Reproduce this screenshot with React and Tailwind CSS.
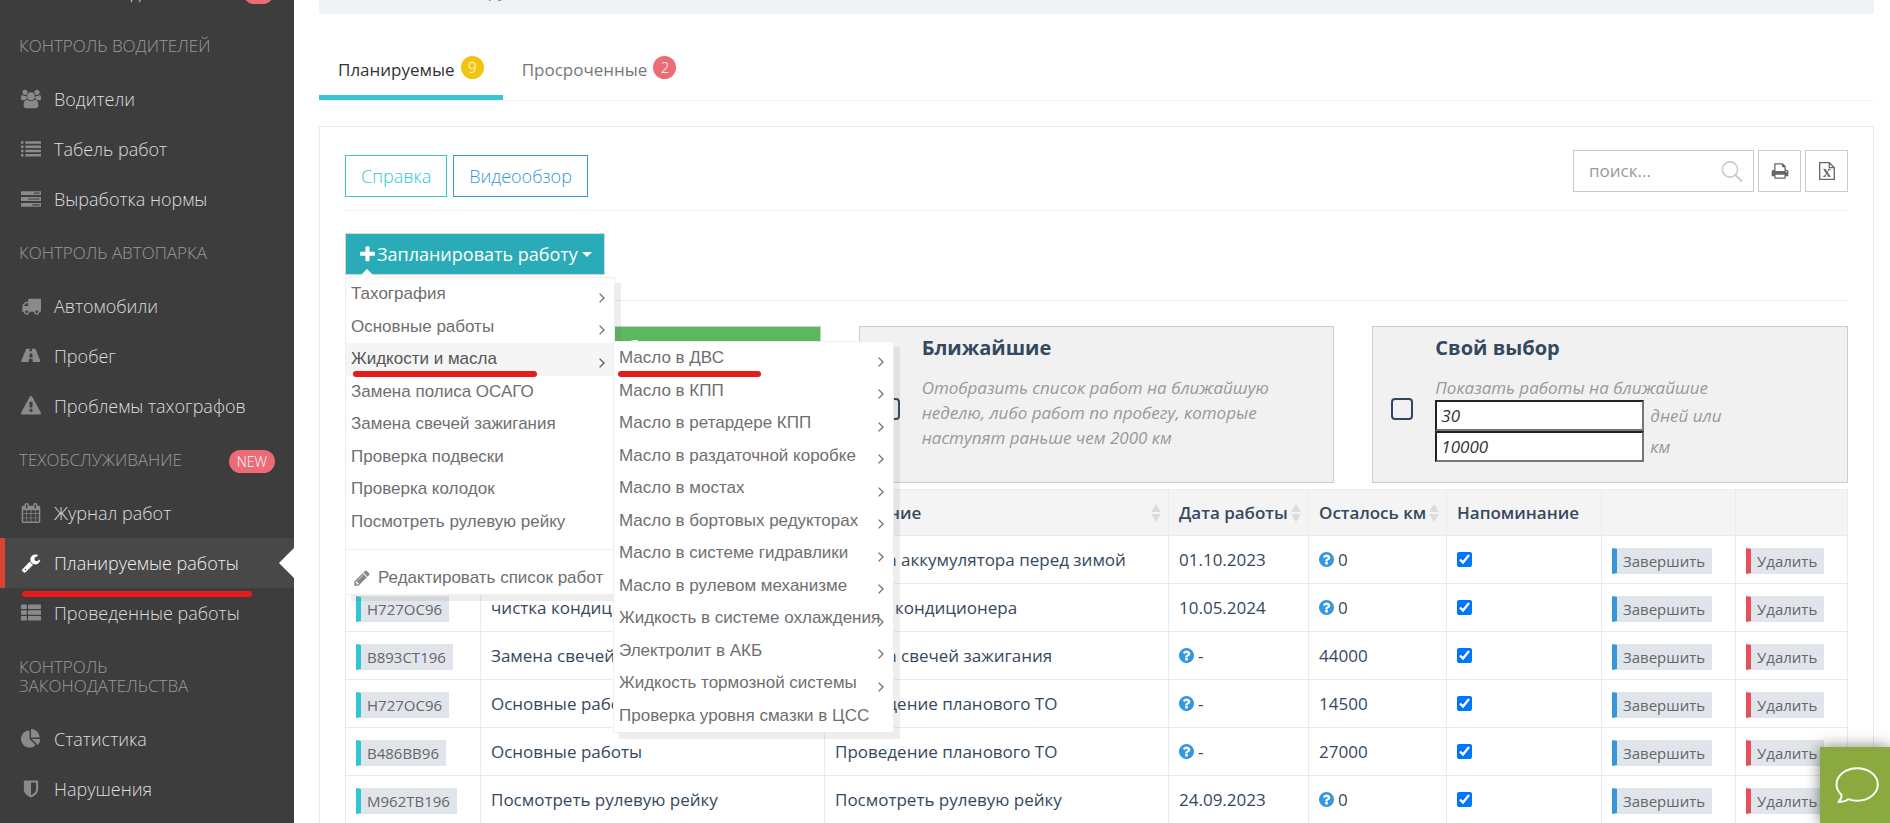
import React from "react";

const PATHS = {
  users: {
    box: "0 0 1920 1792",
    d: "M593 896q-162 5-265 128h-134q-82 0-138-40.5t-56-118.5q0-353 124-353 6 0 43.5 21t97.5 42.5 119 21.5q67 0 133-23-5 37-5 66 0 159 92 256zm1071 637q0 120-73 189.5t-194 69.5h-874q-121 0-194-69.5t-73-189.5q0-53 3.5-103.5t14-109 26.5-108.5 43-97.5 62-81 85.5-53.5 111.5-20q10 0 43 21.5t73 48 107 48 135 21.5 135-21.5 107-48 73-48 43-21.5q61 0 111.5 20t85.5 53.5 62 81 43 97.5 26.5 108.5 14 109 3.5 103.5zm-1024-1277q0 106-75 181t-181 75-181-75-75-181 75-181 181-75 181 75 75 181zm704 384q0 159-112.5 271.5t-271.5 112.5-271.5-112.5-112.5-271.5 112.5-271.5 271.5-112.5 271.5 112.5 112.5 271.5zm576 225q0 78-56 118.5t-138 40.5h-134q-103-123-265-128 92-97 92-256 0-29-5-66 66 23 133 23 59 0 119-21.5t97.5-42.5 43.5-21q124 0 124 353zm-128-609q0 106-75 181t-181 75-181-75-75-181 75-181 181-75 181 75 75 181z",
  },
  laptop: {
    box: "0 0 1920 1792",
    d: "M416 1280q-66 0-113-47t-47-113v-704q0-66 47-113t113-47h1088q66 0 113 47t47 113v704q0 66-47 113t-113 47h-1088zm-32-864v704q0 13 9.500 22.500t22.500 9.500h1088q13 0 22.500-9.500t9.500-22.500v-704q0-13-9.500-22.500t-22.500-9.500h-1088q-13 0-22.500 9.500t-9.500 22.500zM0 1390h1920v120q0 82-160 82H160q-160 0-160-82z",
  },
  list: {
    box: "0 0 1792 1792",
    d: "M0 192h224v224H0zM384 192h1408v224H384zM0 576h224v224H0zM384 576h1408v224H384zM0 960h224v224H0zM384 960h1408v224H384zM0 1344h224v224H0zM384 1344h1408v224H384z",
  },
  tasks: {
    box: "0 0 1792 1792",
    fillRule: "evenodd",
    d: "M0 192h1792v352H0zM1152 320h512v96H1152zM0 720h1792v352H0zM640 848h1024v96H640zM0 1248h1792v352H0zM1024 1376h640v96H1024z",
  },
  thList: {
    box: "0 0 1792 1792",
    d: "M80 128h384q60 0 60 60v280q0 60-60 60H60q-60 0-60-60V188q0-60 80-60zM700 128h1020q72 0 72 60v280q0 60-72 60H700q-70 0-70-60V188q0-60 70-60zM80 650h384q60 0 60 60v280q0 60-60 60H60q-60 0-60-60V710q0-60 80-60zM700 650h1020q72 0 72 60v280q0 60-72 60H700q-70 0-70-60V710q0-60 70-60zM80 1172h384q60 0 60 60v280q0 60-60 60H60q-60 0-60-60v-280q0-60 80-60zM700 1172h1020q72 0 72 60v280q0 60-72 60H700q-70 0-70-60v-280q0-60 70-60z",
  },
  truck: {
    box: "0 0 1792 1792",
    d: "M640 1408q0-52-38-90t-90-38-90 38-38 90 38 90 90 38 90-38 38-90zm-384-512h384v-256h-158q-13 0-22 9l-195 195q-9 9-9 22v30zm1280 512q0-52-38-90t-90-38-90 38-38 90 38 90 90 38 90-38 38-90zm256-1088v1024q0 15-4 26.5t-13.5 18.5-16.5 11.5-23.5 6-22.5 2-25.5 0-22.5-.5q0 106-75 181t-181 75-181-75-75-181h-384q0 106-75 181t-181 75-181-75-75-181h-64q-3 0-22.5.5t-25.5 0-22.5-2-23.5-6-16.5-11.5-13.5-18.5-4-26.5q0-26 19-45t45-19v-320q0-8-.5-35t0-38 2.5-34.5 6.5-37 14-30.5 22.5-30l198-198q19-19 50.5-32t58.5-13h160v-192q0-26 19-45t45-19h1024q26 0 45 19t19 45z",
  },
  road: {
    box: "0 0 1920 1792",
    d: "M1111 1000v-4l-24-320q-1-13-11-22.5t-23-9.5h-186q-13 0-23 9.5t-11 22.5l-24 320v4q-1 12 8 20t21 8h244q12 0 21-8t8-20zm739 398q0 74-46 74h-704q13 0 22-9.5t8-22.5l-20-256q-1-13-11-22.5t-23-9.5h-272q-13 0-23 9.5t-11 22.5l-20 256q-1 13 8 22.5t22 9.5h-704q-46 0-46-74 0-55 26-116l417-1044q8-19 26-33t38-14h339q-13 0-23 9.5t-11 22.5l-15 192q-1 14 8 23t22 9h166q13 0 22-9t8-23l-15-192q-1-13-11-22.5t-23-9.5h339q20 0 38 14t26 33l417 1044q26 61 26 116z",
  },
  warning: {
    box: "0 0 1792 1792",
    d: "M1024 1375v-190q0-14-9.5-23.5t-22.5-9.5h-192q-13 0-22.5 9.5t-9.5 23.5v190q0 14 9.5 23.5t22.5 9.5h192q13 0 22.5-9.5t9.5-23.5zm-2-374l18-459q0-12-10-19-13-11-24-11h-220q-11 0-24 11-10 7-10 21l17 457q0 10 10 16.5t24 6.5h185q14 0 23.5-6.5t10.5-16.5zm-14-934l768 1408q35 63-2 126-17 29-46.5 46t-63.5 17h-1536q-34 0-63.5-17t-46.5-46q-37-63-2-126l768-1408q17-31 47-49t65-18 65 18 47 49z",
  },
  calendar: {
    box: "0 0 1792 1792",
    d: "M192 1664h288v-288h-288v288zm352 0h320v-288h-320v288zm-352-352h288v-320h-288v320zm352 0h320v-320h-320v320zm-352-384h288v-288h-288v288zm736 736h320v-288h-320v288zm-384-736h320v-288h-320v288zm768 736h288v-288h-288v288zm-384-352h320v-320h-320v320zm-352-864v-288q0-13-9.5-22.5t-22.5-9.5h-64q-13 0-22.5 9.5t-9.5 22.5v288q0 13 9.5 22.5t22.5 9.5h64q13 0 22.5-9.5t9.5-22.5zm736 864h288v-320h-288v320zm-384-384h320v-288h-320v288zm384 0h288v-288h-288v288zm32-480v-288q0-13-9.5-22.5t-22.5-9.5h-64q-13 0-22.5 9.5t-9.5 22.5v288q0 13 9.5 22.5t22.5 9.5h64q13 0 22.5-9.5t9.5-22.5zm384-64v1280q0 52-38 90t-90 38h-1408q-52 0-90-38t-38-90v-1280q0-52 38-90t90-38h128v-96q0-66 47-113t113-47h64q66 0 113 47t47 113v96h384v-96q0-66 47-113t113-47h64q66 0 113 47t47 113v96h128q52 0 90 38t38 90z",
  },
  wrench: {
    box: "0 0 1792 1792",
    d: "M448 1472q0-26-19-45t-45-19-45 19-19 45 19 45 45 19 45-19 19-45zm644-420l-682 682q-37 37-90 37-52 0-91-37l-106-108q-38-36-38-90 0-53 38-91l681-681q39 98 114.5 173.5t173.5 114.5zm634-435q0 39-23 106-47 134-164.5 217.5t-258.5 83.5q-185 0-316.5-131.5t-131.5-316.5 131.5-316.5 316.5-131.5q58 0 121.5 16.5t107.5 46.5q16 11 16 28t-16 28l-293 169v224l193 107q5-3 79-48.5t135.5-81 70.5-35.5q15 0 23.5 10t8.5 25z",
  },
  pie: {
    box: "0 0 1792 1792",
    d: "M768 890l546 546q-106 108-247.5 168t-298.5 60q-209 0-385.5-103t-279.5-279.5-103-385.5 103-385.5 279.5-279.5 385.5-103v762zm187 6h773q0 157-60 298.5t-168 247.5zm709-128h-768v-768q209 0 385.5 103t279.5 279.5 103 385.5z",
  },
  shield: {
    box: "0 0 1792 1792",
    d: "M1344 960v-640h-448v1137q119-63 213-137 235-184 235-360zm192-768v768q0 86-33.5 170.5t-83 150-118 127.5-126.5 103-121 77.5-89.5 49.5-42.5 20q-12 6-26 6t-26-6q-16-7-42.5-20t-89.5-49.5-121-77.5-126.5-103-118-127.5-83-150-33.5-170.5v-768q0-26 19-45t45-19h1152q26 0 45 19t19 45z",
  },
  plus: {
    box: "0 0 1792 1792",
    d: "M1600 736v192q0 40-28 68t-68 28h-416v416q0 40-28 68t-68 28h-192q-40 0-68-28t-28-68v-416h-416q-40 0-68-28t-28-68v-192q0-40 28-68t68-28h416v-416q0-40 28-68t68-28h192q40 0 68 28t28 68v416h416q40 0 68 28t28 68z",
  },
  pencil: {
    box: "0 0 1792 1792",
    d: "M491 1536l91-91-235-235-91 91v107h128v128h107zm523-928q0-22-22-22-10 0-17 7l-542 542q-7 7-7 17 0 22 22 22 10 0 17-7l542-542q7-7 7-17zm-54-192l416 416-832 832h-416v-416zm683 96q0 53-37 90l-166 166-416-416 166-165q36-38 90-38 53 0 91 38l235 234q37 39 37 91z",
  },
  print: {
    box: "0 0 1792 1792",
    d: "M448 1536h896v-256h-896v256zm0-640h896v-384h-160q-40 0-68-28t-28-68v-160h-640v640zm1152 64q0-26-19-45t-45-19-45 19-19 45 19 45 45 19 45-19 19-45zm128 0v416q0 13-9.5 22.5t-22.5 9.5h-224v160q0 40-28 68t-68 28h-960q-40 0-68-28t-28-68v-160h-224q-13 0-22.5-9.5t-9.5-22.5v-416q0-79 56.5-135.5t135.5-56.5h64v-544q0-40 28-68t68-28h672q40 0 88 20t76 48l152 152q28 28 48 76t20 88v256h64q79 0 135.5 56.5t56.5 135.5z",
  },
  question: {
    box: "128 128 1536 1536",
    d: "M1024 1376v-192q0-14-9-23t-23-9h-192q-14 0-23 9t-9 23v192q0 14 9 23t23 9h192q14 0 23-9t9-23zm256-672q0-88-55.5-163t-138.5-116-170-41q-243 0-371 213-15 24 8 42l132 100q7 6 19 6 16 0 25-12 53-68 86-92 34-24 86-24 48 0 85.5 26t37.5 59q0 38-20 61t-68 45q-63 28-115.5 86.5t-52.5 125.5v36q0 14 9 23t23 9h192q14 0 23-9t9-23q0-19 21.5-49.5t54.5-49.5q32-18 49-28.5t46-35 44.5-48 28-60.5 12.5-81zm384 192q0 209-103 385.5t-279.5 279.5-385.5 103-385.5-103-279.5-279.5-103-385.5 103-385.5 279.5-279.5 385.5-103 385.5 103 279.5 279.5 103 385.5z",
  },
};

function Icon({ name, className }) {
  const { box, d, fillRule } = PATHS[name];
  return (
    <svg viewBox={box} fill="currentColor" fillRule={fillRule} className={className} aria-hidden="true">
      <path d={d} />
    </svg>
  );
}

const SECTIONS = [
  {
    items: [{ icon: "laptop", label: "Рабочие дни", badge: true }],
  },
  {
    title: "КОНТРОЛЬ ВОДИТЕЛЕЙ",
    items: [
      { icon: "users", label: "Водители" },
      { icon: "list", label: "Табель работ" },
      { icon: "tasks", label: "Выработка нормы" },
    ],
  },
  {
    title: "КОНТРОЛЬ АВТОПАРКА",
    items: [
      { icon: "truck", label: "Автомобили" },
      { icon: "road", label: "Пробег" },
      { icon: "warning", label: "Проблемы тахографов" },
    ],
  },
  {
    title: "ТЕХОБСЛУЖИВАНИЕ",
    badge: "NEW",
    items: [
      { icon: "calendar", label: "Журнал работ" },
      { icon: "wrench", label: "Планируемые работы", active: true },
      { icon: "thList", label: "Проведенные работы" },
    ],
  },
  {
    title: "КОНТРОЛЬ ЗАКОНОДАТЕЛЬСТВА",
    items: [
      { icon: "pie", label: "Статистика" },
      { icon: "shield", label: "Нарушения" },
    ],
  },
];

function NavItem({ icon, label, badge, active }) {
  return (
    <li>
      <a
        href="#"
        className={
          active
            ? "relative flex h-[50px] items-center border-l-[5px] border-[#d84431] bg-[#484848] pl-4 text-[#f1f1f1]"
            : "relative flex h-[50px] items-center border-l-[5px] border-transparent pl-4 text-[#dedede]"
        }
      >
        <Icon name={icon} className={active ? "h-5 w-5 text-white" : "h-5 w-5 text-[#8a8a8a]"} />
        <span className="ml-[13px]">{label}</span>
        {badge && <span className="mr-5 ml-auto h-[23px] w-[31px] rounded-full bg-[#ed6b75]" />}
        {active && (
          <>
            <svg viewBox="0 0 15 30" className="absolute top-[10px] right-0 h-[30px] w-[15px] fill-white" aria-hidden="true">
              <path d="M15 0v30L0 15z" />
            </svg>
            <span className="absolute top-[53px] left-[17px] z-10 h-[6px] w-[230px] rounded-full bg-[#e81b1b]" />
          </>
        )}
      </a>
    </li>
  );
}

function Sidebar() {
  return (
    <nav className="w-[294px] shrink-0 overflow-hidden bg-[#3d3d3d] text-[18px] font-light">
      <div className="-mt-[33px]">
        {SECTIONS.map((s, i) => (
          <section key={i}>
            {s.title && (
              <h3 className="flex items-center justify-between px-[19px] py-[19px] text-[17px] leading-[19px] text-[#9a9a9a]">
                <span>{s.title}</span>
                {s.badge && (
                  <span className="-mt-[2px] -mb-[6px] rounded-full bg-[#ed6b75] px-2 text-[14px] leading-[23px] text-white">{s.badge}</span>
                )}
              </h3>
            )}
            <ul>
              {s.items.map((it) => (
                <NavItem key={it.label} {...it} />
              ))}
            </ul>
          </section>
        ))}
      </div>
    </nav>
  );
}

function Chevron() {
  return (
    <svg viewBox="0 0 6 10" className="absolute right-[9px] bottom-2 h-[10px] w-[6px] fill-none stroke-current" strokeWidth="1.3" aria-hidden="true">
      <path d="M.6.6 5 5 .6 9.4" />
    </svg>
  );
}

const MENU = [
  ["Тахография", true],
  ["Основные работы", true],
  ["Жидкости и масла", true],
  ["Замена полиса ОСАГО", false],
  ["Замена свечей зажигания", false],
  ["Проверка подвески", false],
  ["Проверка колодок", false],
  ["Посмотреть рулевую рейку", false],
];

const SUBMENU = [
  ["Масло в ДВС", true],
  ["Масло в КПП", true],
  ["Масло в ретардере КПП", true],
  ["Масло в раздаточной коробке", true],
  ["Масло в мостах", true],
  ["Масло в бортовых редукторах", true],
  ["Масло в системе гидравлики", true],
  ["Масло в рулевом механизме", true],
  ["Жидкость в системе охлаждения", true],
  ["Электролит в АКБ", true],
  ["Жидкость тормозной системы", true],
  ["Проверка уровня смазки в ЦСС", false],
];

const MENU_FONT = "font-['Liberation_Sans',Arial,sans-serif] text-[17px] leading-[24px] text-[#6f6f6f]";
const MENU_BOX = "border border-[#eeeeee] bg-white shadow-[6px_6px_0_rgba(102,102,102,0.11)]";

function PlanMenu() {
  return (
    <div className={"absolute top-full left-0 z-20 mt-[2px] w-[270px] " + MENU_BOX + " " + MENU_FONT}>
      <svg viewBox="0 0 18 9" className="absolute -top-[9px] left-[12px] h-[9px] w-[18px] fill-white" aria-hidden="true">
        <path d="M0 9 9 0l9 9z" />
      </svg>
      <ul className="grid h-[260px] auto-rows-fr">
        {MENU.map(([label, more]) => {
          const open = label === "Жидкости и масла";
          return (
            <li key={label} className={open ? "relative bg-[#f5f5f5] text-[#555555]" : "relative"}>
              <a href="#" className="flex h-full items-center pl-[5px] whitespace-nowrap">
                {label}
                {more && <Chevron />}
              </a>
              {open && (
                <>
                  <span className="absolute top-[28px] left-[7px] z-10 h-[6px] w-[184px] rounded-full bg-[#e81b1b]" />
                  <ul className={"absolute -top-[2px] left-full z-30 -ml-px grid h-[392px] w-[281px] auto-rows-fr " + MENU_BOX + " text-[#6f6f6f]"}>
                    {SUBMENU.map(([sub, subMore], i) => (
                      <li key={sub} className="relative">
                        <a href="#" className="flex h-full items-center pl-[5px] whitespace-nowrap">
                          {sub}
                          {subMore && <Chevron />}
                        </a>
                        {i === 0 && (
                          <span className="absolute top-[29px] left-[4px] z-10 h-[6px] w-[143px] rounded-full bg-[#e81b1b]" />
                        )}
                      </li>
                    ))}
                  </ul>
                </>
              )}
            </li>
          );
        })}
      </ul>
      <div className="mt-[11px] border-t border-[#eeeeee] pt-[12px]">
        <a href="#" className="flex h-8 items-center pl-[7px] whitespace-nowrap">
          <Icon name="pencil" className="h-[18px] w-[18px] text-[#888888]" />
          <span className="ml-[7px]">Редактировать список работ</span>
        </a>
      </div>
    </div>
  );
}

function Square({ label }) {
  return (
    <input
      type="checkbox"
      aria-label={label}
      className="mt-[9px] h-[22px] w-[22px] appearance-none rounded-[4px] border-2 border-[#2f4763] bg-transparent"
    />
  );
}

function FilterCard({ title, green, children }) {
  return (
    <div
      className={
        green
          ? "flex h-[157px] border border-[#cccccc] bg-[#5cb85c] text-white"
          : "flex h-[157px] border border-[#cccccc] bg-[#f1f1f1] text-[#999999]"
      }
    >
      <div className="flex w-[62px] shrink-0 items-center pl-[18px]">
        <Square label={title} />
      </div>
      <div>
        <h4
          className={
            green
              ? "mt-2 text-[20px] leading-[26px] font-bold"
              : "mt-2 text-[20px] leading-[26px] font-bold text-[#34495e]"
          }
        >
          {title}
        </h4>
        <div className="mt-[14px] leading-[25px] italic">{children}</div>
      </div>
    </div>
  );
}

const INSET =
  "h-[31px] w-[209px] border-2 border-t-[#222222] border-r-[#767676] border-b-[#767676] border-l-[#222222] bg-white px-1 text-[#333333] italic";

const ROWS = [
  ["A123BC96", "Замена аккумулятора", "Замена аккумулятора перед зимой", "01.10.2023", "0"],
  ["H727OC96", "чистка кондиционера", "чистка кондиционера", "10.05.2024", "0"],
  ["B893CT196", "Замена свечей зажигания", "Замена свечей зажигания", "", "44000"],
  ["H727OC96", "Основные работы", "Проведение планового ТО", "", "14500"],
  ["B486BB96", "Основные работы", "Проведение планового ТО", "", "27000"],
  ["M962TB196", "Посмотреть рулевую рейку", "Посмотреть рулевую рейку", "24.09.2023", "0"],
];

const CELL = "border border-[#e7ecf1] px-[10px]";

function Unknown({ value }) {
  return (
    <span className="flex items-center gap-1">
      <Icon name="question" className="h-[15px] w-[15px] text-[#3598dc]" />
      {value}
    </span>
  );
}

function HeadCell({ label, sort }) {
  return (
    <th className={CELL + " pr-0 text-left font-semibold whitespace-nowrap"}>
      <div className="flex items-center justify-between">
        {label}
        {sort && (
          <svg viewBox="0 0 10 18" className="mr-[7px] h-[18px] w-[10px] shrink-0 fill-[#dcdcdc]" aria-hidden="true">
            <path d="M5 0l5 8H0zM5 18l5-8H0z" />
          </svg>
        )}
      </div>
    </th>
  );
}

const LABEL =
  "mt-[2px] block w-fit border border-[#e0e5ec] border-l-[5px] bg-[#e0e5ec] px-[6px] text-[15px] leading-[24px] text-[#666666]";

function WorksTable() {
  return (
    <table className="mt-[6px] w-full table-fixed border-collapse text-[#34495e]">
      <colgroup>
        <col className="w-[135px]" />
        <col />
        <col />
        <col className="w-[140px]" />
        <col className="w-[138px]" />
        <col className="w-[155px]" />
        <col className="w-[134px]" />
        <col className="w-[112px]" />
      </colgroup>
      <thead>
        <tr className="h-[46px] bg-[#f4f4f4]">
          <HeadCell label="Номер" sort />
          <HeadCell label="Работа" sort />
          <HeadCell label="Описание" sort />
          <HeadCell label="Дата работы" sort />
          <HeadCell label="Осталось км" sort />
          <HeadCell label="Напоминание" />
          <HeadCell label="" />
          <HeadCell label="" />
        </tr>
      </thead>
      <tbody>
        {ROWS.map(([plate, work, desc, date, km], i) => (
          <tr key={i} className="h-12">
            <td className={CELL}>
              <span className={LABEL + " border-l-[#32c5d2]"}>{plate}</span>
            </td>
            <td className={CELL + " whitespace-nowrap"}>{work}</td>
            <td className={CELL + " whitespace-nowrap"}>{desc}</td>
            <td className={CELL}>{date || <Unknown value="-" />}</td>
            <td className={CELL}>{km === "0" ? <Unknown value="0" /> : km}</td>
            <td className={CELL}>
              <input type="checkbox" defaultChecked aria-label={"Напоминание: " + work} className="block h-[15px] w-[15px] accent-[#0075ff]" />
            </td>
            <td className={CELL}>
              <button type="button" className={LABEL + " border-l-[#3598dc]"}>Завершить</button>
            </td>
            <td className={CELL}>
              <button type="button" className={LABEL + " border-l-[#e7505a]"}>Удалить</button>
            </td>
          </tr>
        ))}
      </tbody>
    </table>
  );
}

const TAB = "flex h-[58px] items-center gap-[6px] border-b-[5px] px-[19px] pt-[2px]";
const COUNT = "mb-1 h-[23px] w-[23px] rounded-full text-center text-[15px] leading-[22px] font-light text-white";

function Tabs() {
  return (
    <div className="mt-[28px] flex border-b border-[#eef1f5]">
      <a href="#" className={TAB + " border-[#36c6d3] text-[#333333]"}>
        Планируемые
        <span className={COUNT + " bg-[#f1c40f]"}>9</span>
      </a>
      <a href="#" className={TAB + " border-transparent text-[#777777]"}>
        Просроченные
        <span className={COUNT + " bg-[#ed6b75]"}>2</span>
      </a>
    </div>
  );
}

function Toolbar() {
  return (
    <div className="flex items-start justify-between border-b border-[#eef1f5] pb-[13px]">
      <div className="mt-[5px] flex gap-[6px] text-[18px] font-light">
        <button type="button" className="h-[42px] border border-[#32c5d2] px-[15px] text-[#32c5d2]">Справка</button>
        <button type="button" className="h-[42px] border border-[#3598dc] px-[15px] text-[#3598dc]">Видеообзор</button>
      </div>
      <div className="flex gap-1">
        <label className="flex h-[42px] w-[181px] items-center border border-[#c2cad8] pr-[10px] pl-[15px]">
          <input type="text" aria-label="поиск" placeholder="поиск..." className="w-full min-w-0 outline-none placeholder:text-[#999999]" />
          <svg viewBox="0 0 22 21" className="h-[21px] w-[22px] shrink-0 fill-none stroke-[#cccccc]" strokeWidth="1.6" aria-hidden="true">
            <circle cx="9" cy="8.5" r="7.6" />
            <path d="M14.4 14l6.6 6.4" strokeWidth="2" />
          </svg>
        </label>
        <button type="button" aria-label="Печать" className="flex h-[42px] w-[43px] items-center justify-center border border-[#cccccc] text-[#666666]">
          <Icon name="print" className="h-[18px] w-[18px]" />
        </button>
        <button type="button" aria-label="Экспорт в Excel" className="flex h-[42px] w-[43px] items-center justify-center border border-[#cccccc] text-[#666666]">
          <svg viewBox="0 0 16 18" className="h-[18px] w-[16px] fill-none stroke-current" strokeWidth="1.3" aria-hidden="true">
            <path d="M.7.7h9.6l5 5v11.6H.7zM10.3.7v5h5" />
            <path d="M5.6 7.6l4.8 6.6" strokeWidth="1.8" />
            <path d="M10.3 7.6l-4.8 6.6M4.4 7.4h2.8M9 7.4h2.6M4.2 14.3H7M8.8 14.3h2.8" strokeWidth="1" />
          </svg>
        </button>
      </div>
    </div>
  );
}

export default function App() {
  return (
    <div className="flex h-screen overflow-hidden bg-white font-['Open_Sans','Noto_Sans',sans-serif] text-[17px] leading-[24px]">
      <Sidebar />
      <main className="min-w-0 flex-1 overflow-hidden pr-4 pl-[25px]">
        <div className="-mt-[32px] flex h-[46px] items-center gap-3 bg-[#eff3f6] pl-5 text-[#888888]">
          <a href="#">Главная</a>
          <span className="h-1 w-1 rounded-full bg-[#888888]" />
          <span>Планируемые</span>
        </div>
        <Tabs />
        <div className="mt-[25px] border border-[#e7ecf1] px-[25px] pt-[23px] pb-6">
          <Toolbar />
          <div className="border-b border-[#eeeeee] pt-[22px] pb-[25px]">
            <div className="relative w-fit">
              <button type="button" className="flex h-[42px] items-center border border-[#d5d5d5] bg-[#2aacb8] px-3 text-[18px] text-white">
                <Icon name="plus" className="h-[19px] w-[19px]" />
                <span>Запланировать работу</span>
                <svg viewBox="0 0 10 5" className="ml-1 h-[5px] w-[10px] fill-white" aria-hidden="true">
                  <path d="M0 0h10L5 5z" />
                </svg>
              </button>
              <PlanMenu />
            </div>
          </div>
          <div className="mt-[25px] grid grid-cols-3 gap-[38px]">
            <FilterCard title="Все планируемые работы" green>
              Отобразить весь список работ
            </FilterCard>
            <FilterCard title="Ближайшие">
              <p className="max-w-[372px]">
                Отобразить список работ на ближайшую неделю, либо работ по пробегу, которые наступят раньше чем 2000 км
              </p>
            </FilterCard>
            <FilterCard title="Свой выбор">
              <p>Показать работы на ближайшие</p>
              <label className="flex items-center gap-[6px]">
                <input type="text" defaultValue="30" className={INSET} />
                дней или
              </label>
              <label className="flex items-center gap-[6px]">
                <input type="text" defaultValue="10000" className={INSET} />
                км
              </label>
            </FilterCard>
          </div>
          <WorksTable />
        </div>
      </main>
      <button
        type="button"
        aria-label="Открыть чат"
        className="fixed right-0 bottom-0 z-40 flex h-[76px] w-[70px] items-center justify-center bg-[#8aa93e] pl-1 shadow-[0_0_14px_rgba(0,0,0,0.5)]"
      >
        <svg viewBox="0 0 44 36" className="h-9 w-11 fill-none stroke-white" strokeWidth="1.9" strokeLinejoin="round" aria-hidden="true">
          <path d="M6.6 28C3.200 25 1.500 21.500 1.500 17.600 1.500 8.600 10.600 1.300 22.200 1.300S42.800 8.600 42.800 17.600 33.700 33.800 22.200 33.800C18.900 33.800 15.900 33.200 13.200 32.100L11 33.600C8.900 34.600 6.200 35 3.400 35 5.400 33.200 6.700 30.800 6.600 28z" />
        </svg>
      </button>
    </div>
  );
}
